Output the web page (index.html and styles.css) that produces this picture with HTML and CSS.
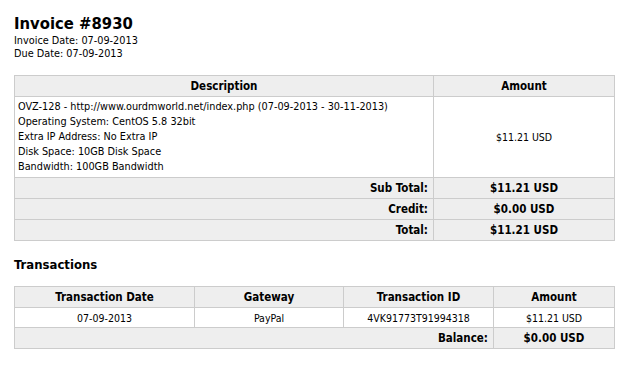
FILE: index.html
```html
<!DOCTYPE html>
<html>
<head>
<meta charset="utf-8">
<link rel="stylesheet" href="styles.css">
</head>
<body>
<div class="page">
  <h1 class="title">Invoice #8930</h1>
  <div class="meta">
    <div>Invoice Date: 07-09-2013</div>
    <div>Due Date: 07-09-2013</div>
  </div>
  <table class="grid items">
    <colgroup><col class="c-desc"><col class="c-amt"></colgroup>
    <tr class="head"><th>Description</th><th>Amount</th></tr>
    <tr class="body-row">
      <td class="desc">OVZ-128 - http://www.ourdmworld.net/index.php (07-09-2013 - 30-11-2013)<br>Operating System: CentOS 5.8 32bit<br>Extra IP Address: No Extra IP<br>Disk Space: 10GB Disk Space<br>Bandwidth: 100GB Bandwidth</td>
      <td class="center">$11.21 USD</td>
    </tr>
    <tr class="sum"><td class="label">Sub Total:</td><td class="val">$11.21 USD</td></tr>
    <tr class="sum"><td class="label">Credit:</td><td class="val">$0.00 USD</td></tr>
    <tr class="sum"><td class="label">Total:</td><td class="val">$11.21 USD</td></tr>
  </table>
  <h2 class="subtitle">Transactions</h2>
  <table class="grid tx">
    <colgroup><col class="c1"><col class="c2"><col class="c3"><col class="c4"></colgroup>
    <tr class="head"><th>Transaction Date</th><th>Gateway</th><th>Transaction ID</th><th>Amount</th></tr>
    <tr class="row"><td>07-09-2013</td><td>PayPal</td><td>4VK91773T91994318</td><td>$11.21 USD</td></tr>
    <tr class="sum"><td colspan="3" class="label">Balance:</td><td class="val">$0.00 USD</td></tr>
  </table>
</div>
</body>
</html>
```
FILE: styles.css
```css
html, body {
  margin: 0;
  padding: 0;
  background: #ffffff;
}
body {
  font-family: "DejaVu Sans Condensed", "DejaVu Sans", sans-serif;
  font-size: 10.8px;
  color: #000;
}
.page {
  padding: 13px 14px 0 14px;
}
.title {
  margin: 0;
  font-size: 16.5px;
  line-height: 21px;
  font-weight: bold;
}
.meta {
  line-height: 13px;
  margin-bottom: 15px;
}
.grid {
  border-collapse: collapse;
  width: 600px;
  table-layout: fixed;
}
.grid th, .grid td {
  border: 1px solid #cccccc;
  padding: 0 3px;
  height: 20px;
}
.grid th {
  background: #eeeeee;
  font-size: 11.5px;
  font-weight: bold;
  text-align: center;
}
.items .c-desc { width: 419px; }
.items .c-amt { width: 181px; }
.grid .desc {
  line-height: 15px;
  padding: 2px 3px 3px 3px;
  vertical-align: top;
}
.grid .center { text-align: center; font-size: 10.5px; }
.sum td {
  background: #eeeeee;
  font-size: 11.5px;
  font-weight: bold;
}
.sum .label { text-align: right; padding-right: 5px; }
.sum .val { text-align: center; }
.subtitle {
  margin: 16px 0 13px 0;
  font-size: 13px;
  line-height: 16px;
  font-weight: bold;
}
.tx .c1 { width: 180px; }
.tx .c2 { width: 149px; }
.tx .c3 { width: 150px; }
.tx .c4 { width: 121px; }
.tx .row td { text-align: center; height: 19px; font-size: 10.5px; }
```
